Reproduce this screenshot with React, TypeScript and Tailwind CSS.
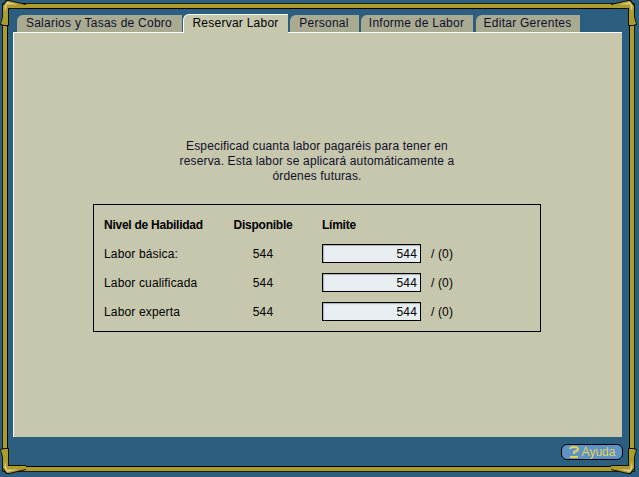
import React from "react";

const tabs = [
  { label: "Salarios y Tasas de Cobro", w: "w-[165px]" },
  { label: "Reservar Labor", w: "w-[105px] ml-[1px]", active: true },
  { label: "Personal", w: "w-[69px] ml-[2px]" },
  { label: "Informe de Labor", w: "w-[112px] ml-[2px]" },
  { label: "Editar Gerentes", w: "w-[104px] ml-[3px]" },
];

const rows = ["Labor básica:", "Labor cualificada", "Labor experta"];

// gold frame corner flourish
const Corner = ({ className }: { className: string }) => (
  <svg className={`absolute ${className}`} width="28" height="28" viewBox="0 0 28 28">
    <path d="M6 0 L9 0 L26 4 L26 9 L9 9 L9 26 L4 26 L0 25 L2 17 L2 6 Z" fill="#101008" />
    <path d="M7 1 L9 1 L26 5 L26 8 L8 8 L8 25 L4 25 L1 24 L3 17 L3 6 Z" fill="#ad9c2c" />
    <path d="M7 2 L18 4.5 L7 4.5 L5 12 L4.5 6 Z" fill="#d6cf8e" />
  </svg>
);

const App = () => {
  return (
    <div className="relative w-[639px] h-[477px] overflow-hidden bg-[#2c5f7f] font-['Liberation_Sans',Arial,sans-serif] text-[12px] tracking-[0.15px] text-black">
      {/* frame */}
      <div className="h-full pt-[3px] pl-[2px] pr-[4px] pb-[5px]">
        <div className="h-full border-[1px] border-[#1c1c10]">
          <div className="h-full border-[4px] border-[#ad9c2c]">
            <div className="h-full border-[1px] border-black flex flex-col pl-[5px] pr-[7px] pt-[4px]">
              {/* tabs */}
              <div className="flex items-end h-[19px] pl-[4px] relative z-10 tracking-[0.25px]">
                {tabs.map((t) =>
                  t.active ? (
                    <div
                      key={t.label}
                      className={`${t.w} h-[19px] -mb-[1px] flex items-center justify-center bg-[#c6c7ad] border-t border-l border-white rounded-tl-[6px] pb-[3px] pr-[1px]`}
                    >
                      {t.label}
                    </div>
                  ) : (
                    <div
                      key={t.label}
                      className={`${t.w} h-[17px] flex items-center justify-center bg-[#a9aa92] text-[#10102a] rounded-tl-[6px] pb-[2px] pr-[1px]`}
                    >
                      {t.label}
                    </div>
                  )
                )}
              </div>

              {/* panel */}
              <div className="h-[405px] bg-[#c6c7ad] border-t border-l border-white flex flex-col items-center pt-[106px] pr-[2px]">
                <p className="w-[300px] text-center leading-[15px] text-[#10102a]">
                  Especificad cuanta labor pagaréis para tener en reserva. Esta labor se aplicará automáticamente a órdenes futuras.
                </p>

                <div className="mt-[20px] w-[448px] h-[128px] border border-black pl-[10px] pt-[11px]">
                  <div className="flex items-center h-[18px] pb-[1px] font-bold tracking-[-0.25px]">
                    <span className="w-[129px]">Nivel de Habilidad</span>
                    <span className="w-[60px] text-center">Disponible</span>
                    <span className="ml-[29px]">Límite</span>
                  </div>
                  {rows.map((r) => (
                    <div key={r} className="flex items-center h-[19px] mt-[10px]">
                      <span className="w-[129px]">{r}</span>
                      <span className="w-[60px] text-center">544</span>
                      <div className="ml-[29px] w-[99px] h-[19px] border border-black bg-[#e9eef2] shadow-[inset_1px_1px_1px_#aab0b4] text-right pr-[3px] leading-[18px]">
                        544
                      </div>
                      <span className="ml-[10px]">/ (0)</span>
                    </div>
                  ))}
                </div>
              </div>

              {/* footer */}
              <div className="flex-1 flex items-center justify-end -mr-[1px]">
                <button className="flex items-center justify-center gap-[3px] w-[62px] h-[16px] rounded-[6px] border border-black bg-[#5f93c4] text-[#e0d25a] text-[12px] tracking-normal">
                  <svg width="10" height="12" viewBox="0 0 10 12">
                    <path d="M1 3 Q1 1 5 1 Q9 1 9 3 Q9 5 5 6 V8" fill="none" stroke="#e0d25a" strokeWidth="2" />
                    <path d="M1 11 H9" stroke="#e0d25a" strokeWidth="2" />
                  </svg>
                  <span>Ayuda</span>
                </button>
              </div>
            </div>
          </div>
        </div>
      </div>
      <Corner className="left-0 top-0" />
      <Corner className="right-[2px] top-0 -scale-x-100" />
      <Corner className="left-0 bottom-[3px] -scale-y-100" />
      <Corner className="right-[2px] bottom-[3px] -scale-x-100 -scale-y-100" />
    </div>
  );
};

export default App;
